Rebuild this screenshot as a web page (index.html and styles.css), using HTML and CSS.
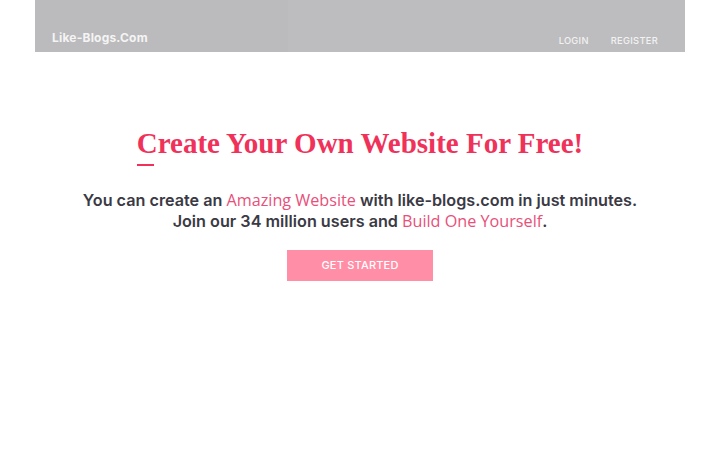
FILE: index.html
```html
<!DOCTYPE html>
<html lang="en">
<head>
    <meta charset="UTF-8">
    <meta name="viewport" content="width=device-width, initial-scale=1.0">
    <title>Like-Blogs.Com</title>
    <link rel="stylesheet" href="styles.css">
</head>
<body>

    <!-- Top bar -->
    <header class="topbar">
        <a class="brand" href="#">Like-Blogs.Com</a>
        <nav class="nav">
            <a href="#">Login</a>
            <a href="#">Register</a>
        </nav>
    </header>

    <!-- Hero -->
    <section class="hero">
        <h1 class="hero-title">Create Your Own Website For Free!</h1>
        <p class="hero-text">
            You can create an <span class="accent">Amazing Website</span> with like-blogs.com in just minutes.<br>
            Join our 34 million users and <span class="accent">Build One Yourself</span>.
        </p>
        <a class="btn" href="#">Get Started</a>
    </section>

</body>
</html>
```

FILE: styles.css
```css
/* General Styles */
body {
    margin: 0;
    padding: 0;
    font-family: Inter, "Noto Sans", sans-serif;
    background: #fff;
}

a {
    text-decoration: none;
}

/* Top bar */
.topbar {
    margin: 0 35px;
    height: 52px;
    box-sizing: border-box;
    padding: 0 27px 6px 17px;
    background: linear-gradient(90deg, #bbbbbd 0%, #bbbbbd 39%, #bdbdbf 39%, #bdbdbf 100%);
    display: flex;
    align-items: flex-end;
    justify-content: space-between;
}

.brand {
    color: #f4f4f4;
    font-weight: 700;
    font-size: 12px;
    letter-spacing: 0.2px;
    margin-bottom: 1px;
}

.nav {
    display: flex;
    gap: 22px;
}

.nav a {
    color: #f2f2f2;
    font-size: 9.3px;
    font-weight: 500;
    text-transform: uppercase;
    letter-spacing: 0.3px;
}

/* Hero */
.hero {
    text-align: center;
    padding-top: 75px;
}

.hero-title {
    display: inline-block;
    position: relative;
    margin: 0;
    font-family: "Liberation Serif", "DejaVu Serif", serif;
    font-size: 29px;
    font-weight: 700;
    color: #f0325a;
    padding-bottom: 6px;
}

.hero-title::after {
    content: "";
    position: absolute;
    left: 0;
    bottom: 0;
    width: 17px;
    height: 2px;
    background: #f0325a;
}

.hero-text {
    margin: 24px 0 18px;
    font-size: 16.2px;
    font-weight: 600;
    line-height: 21px;
    color: #3b3a44;
}

.accent {
    font-family: "Open Sans", sans-serif;
    font-weight: 400;
    color: #e8507a;
}

.btn {
    display: inline-block;
    width: 146px;
    height: 31px;
    line-height: 31px;
    background: #ff8ea6;
    color: #fff;
    font-size: 11px;
    font-weight: 500;
    text-transform: uppercase;
    letter-spacing: 0.2px;
}
```
